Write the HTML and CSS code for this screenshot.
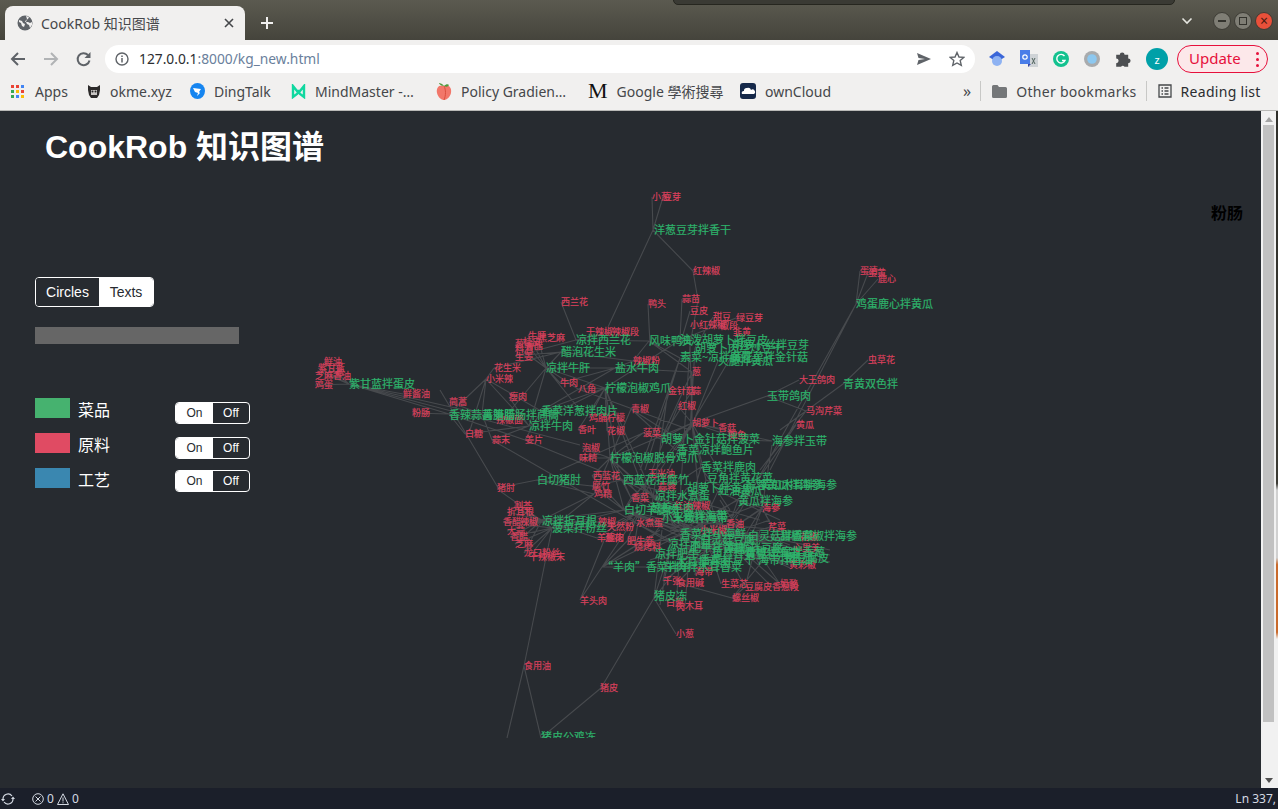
FILE: index.html
```html
<!DOCTYPE html>
<html lang="en">
<head>
  <meta charset="UTF-8">
  <title>CookRob 知识图谱</title>
  <link rel="stylesheet" href="styles.css">
</head>
<body>
  <div class="titlebar">
    <div class="other-window"></div>
    <div class="tab">
      <svg class="globe" width="16" height="16" viewBox="0 0 16 16"><circle cx="8" cy="8" r="7.5" fill="#5f6368"/><path d="M2 5l3 1 1 2 2 1-1 3-2-1-1-3-2-1zM9 1l3 1-1 2-2 1-1 2 3 0 2 1 2-1 0 3-2 3-1-3-2-1-1-2 1-3z" fill="#f1f0ef"/></svg>
      <span class="tab-title">CookRob 知识图谱</span>
      <svg class="tab-close" width="10" height="10" viewBox="0 0 10 10"><path d="M1 1l8 8M9 1l-8 8" stroke="#45474a" stroke-width="1.6"/></svg>
    </div>
    <svg class="new-tab" width="14" height="14" viewBox="0 0 14 14"><path d="M7 1v12M1 7h12" stroke="#f1f0ef" stroke-width="2"/></svg>
    <div class="win-controls">
      <svg class="chevron" width="12" height="8" viewBox="0 0 12 8"><path d="M1.5 1.5L6 6l4.5-4.5" fill="none" stroke="#e6e6e0" stroke-width="1.6"/></svg>
      <span class="win-btn"><i class="win-min"></i></span>
      <span class="win-btn"><i class="win-max"></i></span>
      <span class="win-btn win-close">×</span>
    </div>
  </div>

  <div class="toolbar">
    <div class="nav">
      <svg width="16" height="16" viewBox="0 0 16 16"><path d="M15 8H2M8 2L2 8l6 6" fill="none" stroke="#5f6368" stroke-width="2"/></svg>
      <svg width="16" height="16" viewBox="0 0 16 16"><path d="M1 8h13M8 2l6 6-6 6" fill="none" stroke="#b1b3b5" stroke-width="2"/></svg>
      <svg width="16" height="16" viewBox="0 0 16 16"><path d="M13.5 9.5A6 6 0 1 1 12 4" fill="none" stroke="#5f6368" stroke-width="2"/><path d="M14.5 1v6h-6z" fill="#5f6368"/></svg>
    </div>
    <div class="omnibox">
      <svg width="14" height="14" viewBox="0 0 14 14"><circle cx="7" cy="7" r="6" fill="none" stroke="#5f6368" stroke-width="1.4"/><path d="M7 6v4.500M7 3.500v1.500" stroke="#5f6368" stroke-width="1.5"/></svg>
      <span class="url"><b>127.0.0.1</b>:8000/kg_new.html</span>
      <svg class="send" width="16" height="14" viewBox="0 0 16 14"><path d="M1 1l14 6-14 6 1.500-5L9 7 2.500 6z" fill="#5f6368"/></svg>
      <svg class="star" width="16" height="16" viewBox="0 0 16 16"><path d="M8 1.500l2 4.500 4.800.4-3.600 3.200 1.100 4.800L8 12l-4.300 2.400 1.100-4.800L1.200 6.400 6 6z" fill="none" stroke="#5f6368" stroke-width="1.400"/></svg>
    </div>
    <div class="extensions">
      <svg width="16" height="18" viewBox="0 0 16 18"><path d="M8 1l8 6-8 5-8-5z" fill="#3b66d8"/><circle cx="8" cy="11" r="5" fill="#8eb2f2"/></svg>
      <svg width="18" height="18" viewBox="0 0 18 18"><path d="M8 4h10v13H8z" fill="#cfd3d6"/><path d="M0 0h10v14H0z" fill="#4a7de8"/><circle cx="5" cy="7" r="2.200" fill="none" stroke="#fff" stroke-width="1.200"/><path d="M8 14h3l-3 3z" fill="#3a49a8"/><path d="M12 8l3 6M15 8l-3 6" stroke="#50625c"/></svg>
      <svg width="16" height="16" viewBox="0 0 16 16"><circle cx="8" cy="8" r="8" fill="#13c28f"/><path d="M11.500 5A4.300 4.300 0 1 0 12 9.500H9" fill="none" stroke="#fff" stroke-width="1.400"/></svg>
      <svg width="16" height="16" viewBox="0 0 16 16"><circle cx="8" cy="8" r="8" fill="#a9abad"/><circle cx="8" cy="8" r="4.800" fill="#8dc8f0"/></svg>
      <svg width="18" height="18" viewBox="0 0 15 15"><path d="M1 4h3a2 2 0 0 1 4 0h3v3a2 2 0 0 1 0 4v3H8a2 2 0 0 0-3 0H1v-3a2 2 0 0 0 0-4z" fill="#4d4f52"/></svg>
      <span class="avatar">z</span>
    </div>
    <div class="update">Update <span class="dots"><i></i><i></i><i></i></span></div>
  </div>

  <div class="bookmarks">
    <div class="bm">
      <svg class="apps" width="13" height="13" viewBox="0 0 13 13"><path d="M0 0h3v3H0z" fill="#ea4335"/><path d="M5 0h3v3H5z" fill="#ea4335"/><path d="M10 0h3v3h-3z" fill="#4285f4"/><path d="M0 5h3v3H0z" fill="#34a853"/><path d="M5 5h3v3H5z" fill="#fbbc05"/><path d="M10 5h3v3h-3z" fill="#ea4335"/><path d="M0 10h3v3H0z" fill="#34a853"/><path d="M5 10h3v3H5z" fill="#4285f4"/><path d="M10 10h3v3h-3z" fill="#fbbc05"/></svg>
      <span>Apps</span>
    </div>
    <div class="bm">
      <svg width="14" height="15" viewBox="0 0 14 15"><path d="M1 1l3 2h6l3-2v5l-1 5-2 3H4l-2-3-1-5z" fill="#2c2a2a"/><path d="M4 6h6v5H4z" fill="#c9c6c4"/><circle cx="5.500" cy="7.500" r="1" fill="#222"/><circle cx="8.500" cy="7.500" r="1" fill="#222"/></svg>
      <span>okme.xyz</span>
    </div>
    <div class="bm">
      <svg width="15" height="16" viewBox="0 0 15 16"><ellipse cx="7.500" cy="8" rx="7.500" ry="8" fill="#1685f0"/><path d="M3 5l8 1-2 3 1 1-3 3 1-3-3-1z" fill="#fff"/></svg>
      <span>DingTalk</span>
    </div>
    <div class="bm">
      <svg width="15" height="15" viewBox="0 0 15 15"><path d="M2 2v11l4-3 1.500-2L9 10l4 3V2L9 7H6z" fill="none" stroke="#10d8a0" stroke-width="2.400"/></svg>
      <span>MindMaster -…</span>
    </div>
    <div class="bm">
      <svg width="16" height="18" viewBox="0 0 16 18"><path d="M8 4C3 2 0 6 1 11c1 4 4 7 7 7s6-3 7-7c1-5-2-9-7-7z" fill="#f2776a"/><path d="M8 4C10 8 10 13 8 18" fill="none" stroke="#d9503f"/><path d="M8 4C6 1 3 1 3 1s1 3 5 3zM8 4c2-2 4-2 5-1-1 2-3 2-5 1z" fill="#4d9a3a"/></svg>
      <span>Policy Gradien…</span>
    </div>
    <div class="bm">
      <span class="m-logo">M</span>
      <span>Google 學術搜尋</span>
    </div>
    <div class="bm">
      <svg width="16" height="16" viewBox="0 0 16 16"><rect width="16" height="16" rx="3" fill="#16294a"/><path d="M2 11a2 2 0 0 1 2-3 2.500 2.500 0 0 1 3-3 3 3 0 0 1 4 2 2 2 0 0 1 3 4z" fill="#fff"/></svg>
      <span>ownCloud</span>
    </div>
    <div class="bm-right">
      <span class="more">»</span>
      <i class="sep"></i>
      <svg class="folder" width="15" height="13" viewBox="0 0 15 13"><path d="M0 1.500A1.500 1.500 0 0 1 1.500 0h4L7 2h6.500A1.500 1.500 0 0 1 15 3.500v8a1.500 1.500 0 0 1-1.500 1.500h-12A1.500 1.500 0 0 1 0 11.500z" fill="#757779"/></svg>
      <span class="wide">Other bookmarks</span>
      <i class="sep"></i>
      <svg class="list-icon" width="14" height="14" viewBox="0 0 14 14"><path d="M1 1h12v12H1zM3.500 4H5M6.500 4h4M3.500 7H5M6.500 7h4M3.500 10H5M6.500 10h4" fill="none" stroke="#45474a" stroke-width="1.300"/></svg>
      <span class="wide reading">Reading list</span>
    </div>
  </div>

  <div class="content">
    <main class="page">
      <h1 class="page-title">CookRob 知识图谱</h1>
      <div class="hover-label">粉肠</div>

      <div class="sidebar">
        <div class="view-switch">
          <span class="view-btn view-active">Circles</span>
          <span class="view-btn">Texts</span>
        </div>
        <div class="search-bar"></div>
        <div class="legend">
          <div class="legend-row">
            <span class="swatch swatch-dish"></span><span class="legend-name">菜品</span>
            <div class="toggle"><span class="toggle-on">On</span><span class="toggle-off">Off</span></div>
          </div>
          <div class="legend-row">
            <span class="swatch swatch-ing"></span><span class="legend-name">原料</span>
            <div class="toggle"><span class="toggle-on">On</span><span class="toggle-off">Off</span></div>
          </div>
          <div class="legend-row">
            <span class="swatch swatch-craft"></span><span class="legend-name">工艺</span>
            <div class="toggle toggle-last"><span class="toggle-on">On</span><span class="toggle-off">Off</span></div>
          </div>
        </div>
      </div>

      <svg class="graph" width="938" height="558" viewBox="262 180 938 558">
        <path class="links" d="M653 230L652 197M653 230L663 197M653 230L608 327M653 230L693 271M693 271L698 300M698 300L690 345M690 311L680 345
        M561 302L576 340M561 302L576 340M648 304L650 345M682 299L680 340M736 318L680 340M713 317L695 348
        M868 360L843 384M843 384L780 430M860 271L856 304M868 273L856 304M878 279L856 304M856 304L770 470M856 304L735 520
        M799 380L767 396M767 396L806 411M806 411L760 470M767 396L692 423M796 425L730 520
        M349 384L315 385M349 384L320 372M349 384L324 362M349 384L318 368M349 384L333 376M349 384L449 414M349 384L482 414M349 384L403 394M349 384L580 445M412 413L449 414M449 402L482 414
        M486 379L449 414M486 379L482 414M486 379L541 411M486 379L494 368M486 379L470 430M494 368L561 352M486 379L529 426M515 345L546 368M523 340L546 368M528 335L546 368M538 338L546 368M515 356L561 352M515 356L576 340M546 368L561 352
        M546 368L529 426M546 368L580 410M546 368L578 389M546 368L615 368M546 368L605 388M546 368L560 383M546 368L509 412M560 383L615 368M578 389L605 388M578 389L690 430M615 368L633 361M615 368L692 372M615 368L541 411M509 397L529 426M561 352L633 361M576 340L649 341M576 340L612 332
        M605 388L589 418M605 388L607 431M605 388L578 430M605 388L610 458M605 388L640 480M605 388L655 500M605 388L541 411M605 388L529 426M605 388L620 480M605 388L680 340M649 341L680 358M649 341L633 361M649 341L692 372
        M465 434L529 426M465 434L449 414M492 440L482 414M492 440L529 426M492 440L700 560M525 440L449 414M525 440L541 411M525 440L623 480M582 448L610 458M579 458L610 458M631 409L610 458M631 409L680 440M631 409L676 450
        M692 372L692 423M692 372L661 439M692 391L692 423M692 391L661 439M678 406L692 423M678 406L640 500M668 391L661 439M668 391L650 520M680 358L645 470M680 358L640 470M731 357L692 423M718 361L690 430M695 348L690 430M690 345L692 423M690 345L680 500M680 340L605 388
        M692 423L718 428M692 423L728 435M692 423L772 441M692 423L661 439M692 423L676 450M692 423L701 467M692 423L706 480M692 423L705 560M692 423L640 500M692 423L624 510M692 423L655 497M692 423L610 458M692 423L730 490M643 433L661 439M643 433L560 470M643 433L610 458
        M610 458L640 497M610 458L624 510M610 458L680 520M610 458L700 540M610 458L655 497M610 458L592 476M610 458L594 494M610 458L631 498
        M537 480L497 488M537 480L592 486M537 480L594 494M592 476L624 510M592 486L624 510M594 494L542 520M594 494L552 528M623 480L631 498M623 480L593 476M623 480L700 545M623 480L675 506M623 480L590 486M623 480L760 520
        M631 498L624 510M631 498L690 530M631 498L730 520M631 498L655 497M631 498L650 480M675 506L655 497M675 506L720 540M624 510L636 523M624 510L542 520M624 510L552 528M624 510L700 540M624 510L750 550M624 510L760 560M624 510L720 555M624 510L710 530
        M655 497L730 520M655 497L690 550M655 497L760 540M655 497L780 550M655 497L701 467M701 467L730 510M701 467L680 540M706 480L760 500M706 480L690 530M687 488L720 520M687 488L650 540M718 491L780 520M718 491L700 530M738 500L762 508M738 500L700 520M738 500L720 550M760 485L762 508M760 485L690 530
        M762 508L730 560M762 508L750 540M762 508L700 550M762 508L772 445M762 508L780 540M762 508L790 560M762 508L770 500M762 508L736 550M772 441L740 440
        M542 520L514 507M542 520L507 512M542 520L503 522M542 520L520 522M542 520L507 531M542 520L510 537M542 520L515 544M542 520L524 553M542 520L598 522M552 528L514 507M552 528L503 522M552 528L510 537M552 528L515 544M552 528L524 553M552 528L529 557M552 528L598 522M552 528L607 527M552 528L524 666M552 528L500 491M500 491L440 390M542 520L597 538
        M598 522L636 523M607 527L640 510M597 538L640 510M605 538L640 510M605 538L580 600M627 541L640 510M634 547L640 510M627 541L602 567M634 547L602 567M636 523L700 530M636 523L680 545M636 523L710 560M627 541L690 540M634 547L700 560
        M602 567L580 600M602 567L735 567M602 567L700 520M602 567L660 530M602 567L640 510M654 598L601 688M654 598L676 634M654 598L662 530M654 598L670 550M654 598L700 540M660 605L670 550M685 606L690 545M676 607L680 550M524 666L507 738M524 666L541 738M601 688L541 738
        M663 581L670 545M663 581L720 540M677 583L720 540M677 583L732 598M732 598L780 540M732 598L745 587M721 584L710 550M745 587L760 530M772 587L730 545M780 584L730 540M780 584L760 555M745 587L715 530
        M650 520L830 555M670 530L830 562M680 540L800 565M690 520L790 568M700 530L800 540M710 525L830 550M720 545L817 536M730 530L793 548M740 550L789 565M750 530L790 545M700 560L820 555M680 555L800 530M660 560L770 527M650 550L730 510M665 540L770 500M675 520L760 560M700 510L780 560M720 500L760 565M690 500L740 560M710 500L730 570M740 510L690 570M760 510L670 570M770 520L650 560M780 530L670 520M800 540L680 530M695 575L740 520M695 575L700 530"/>

        <g class="ing">
          <text x="561" y="305">西兰花</text><text x="586" y="335">干辣椒</text><text x="612" y="335">辣椒段</text>
          <text x="528" y="339">牛肝</text><text x="523" y="345">桂皮</text><text x="538" y="341">黑芝麻</text><text x="515" y="347">葱</text><text x="525" y="349">香醋</text><text x="515" y="352">料酒</text><text x="515" y="360">生姜</text>
          <text x="494" y="371">花生米</text><text x="486" y="382">小米辣</text><text x="560" y="386">牛肉</text><text x="578" y="392">八角</text><text x="509" y="400">瘦肉</text>
          <text x="449" y="405">茼蒿</text><text x="403" y="397">鲜酱油</text><text x="412" y="416">粉肠</text><text x="496" y="423">辣椒面</text><text x="589" y="421">鸡脯柠檬</text>
          <text x="578" y="433">香叶</text><text x="607" y="434">花椒</text><text x="465" y="437">白糖</text><text x="492" y="443">蒜末</text><text x="525" y="443">姜片</text><text x="582" y="451">泡椒</text><text x="579" y="461">味精</text>
          <text x="324" y="365">鲜油</text><text x="318" y="371">紫甘蓝</text><text x="335" y="375">盐</text><text x="315" y="379">芝麻</text><text x="333" y="379">香油</text><text x="315" y="388">鸡蛋</text>
          <text x="652" y="200">小葱</text><text x="663" y="200">豆芽</text><text x="693" y="274">红辣椒</text><text x="682" y="302">蒜苗</text><text x="690" y="314">豆皮</text><text x="648" y="307">鸭头</text>
          <text x="713" y="320">甜豆</text><text x="736" y="321">绿豆芽</text><text x="690" y="328">小红辣椒</text><text x="720" y="329">椒段</text><text x="733" y="335">韭黄</text>
          <text x="633" y="364">辣椒粉</text><text x="692" y="375">葱</text><text x="668" y="394">金针菇</text><text x="692" y="394">蒜</text><text x="678" y="409">红椒</text><text x="631" y="412">青椒</text>
          <text x="692" y="426">胡萝卜</text><text x="718" y="431">香菇</text><text x="728" y="438">鲍鱼</text><text x="643" y="436">菠菜</text>
          <text x="860" y="274">蛋清</text><text x="868" y="276">蛋黄</text><text x="878" y="282">鹿心</text><text x="868" y="363">虫草花</text><text x="799" y="383">大王鸽肉</text><text x="806" y="414">马沟芹菜</text><text x="796" y="428">黄瓜</text>
          <text x="497" y="491">猪肘</text><text x="593" y="479">西蓝花</text><text x="592" y="489">腐竹</text><text x="594" y="497">鸡精</text><text x="648" y="477">玉米油</text><text x="658" y="490">蒜蓉</text><text x="631" y="501">香菜</text><text x="674" y="509">红油辣椒</text><text x="762" y="511">海参</text>
          <text x="636" y="526">水煮蛋</text><text x="514" y="509">割荟</text><text x="507" y="515">折耳根</text><text x="503" y="525">香醋</text><text x="520" y="525">辣椒</text><text x="507" y="534">大蒜</text><text x="510" y="540">香醋</text><text x="515" y="547">芝麻</text><text x="524" y="556">龙口粉丝</text><text x="529" y="560">干辣椒末</text>
          <text x="598" y="525">辣椒</text><text x="607" y="530">天然粉</text><text x="597" y="541">羊腿肉</text><text x="605" y="541">葱花</text><text x="627" y="544">肥牛卷</text><text x="634" y="550">烧烤料</text>
          <text x="726" y="527">香油</text><text x="700" y="533">小米椒</text><text x="768" y="530">芹菜</text><text x="793" y="551">心里美</text><text x="789" y="568">黄彩椒</text><text x="800" y="540">花椒</text><text x="695" y="575">海带</text>
          <text x="663" y="584">千张</text><text x="677" y="586">食用碱</text><text x="721" y="587">生菜芯</text><text x="745" y="590">豆腐皮</text><text x="772" y="590">香葱段</text><text x="780" y="587">奶酪</text><text x="732" y="601">螺丝椒</text>
          <text x="580" y="604">羊头肉</text><text x="666" y="606">白葱</text><text x="676" y="610">肉</text><text x="685" y="609">木耳</text><text x="676" y="637">小葱</text><text x="524" y="669">食用油</text><text x="600" y="691">猪皮</text>
        </g>

        <g class="dish">
          <text x="654" y="234">洋葱豆芽拌香干</text><text x="856" y="308">鸡蛋鹿心拌黄瓜</text><text x="576" y="344">凉拌西兰花</text><text x="561" y="356">醋泡花生米</text><text x="649" y="345">风味鸭头</text>
          <text x="680" y="344">油泼胡萝卜拌豆皮</text><text x="695" y="352">胡萝卜肉丝炒豆干</text><text x="732" y="349">胡萝卜丝拌豆芽</text><text x="680" y="361">素菜~凉拌腐竹</text><text x="718" y="365">火腿拌黄瓜</text><text x="731" y="361">黄花菜拌金针菇</text>
          <text x="546" y="372">凉拌牛肝</text><text x="615" y="372">盐水牛肉</text><text x="605" y="392">柠檬泡椒鸡爪</text><text x="767" y="400">玉带鸽肉</text><text x="843" y="388">青黄双色拌</text><text x="349" y="388">紫甘蓝拌蛋皮</text>
          <text x="449" y="419">香辣蒜香腊肠</text><text x="482" y="419">莴笋腊肠拌茼蒿</text><text x="541" y="415">香菜洋葱拌肉片</text><text x="529" y="430">凉拌牛肉</text>
          <text x="610" y="462">柠檬泡椒脱骨鸡爪</text><text x="661" y="443">胡萝卜金针菇拌菠菜</text><text x="677" y="454">香菜凉拌鲍鱼片</text><text x="772" y="445">海参拌玉带</text><text x="701" y="471">香菜拌鹿肉</text>
          <text x="537" y="484">白切猪肘</text><text x="623" y="484">西蓝花拌腐竹</text><text x="707" y="482">豆角拌黄花菜</text><text x="687" y="492">胡萝卜拌黄瓜</text><text x="718" y="495">红油黄瓜</text><text x="745" y="489">蒜蓉黄瓜拌海参</text><text x="760" y="489">黄瓜木耳拌海参</text><text x="738" y="505">黄瓜拌海参</text>
          <text x="655" y="500">凉拌水煮蛋</text><text x="624" y="514">白切羊腿肉</text><text x="650" y="512">葱姜羊肉</text><text x="542" y="525">凉拌折耳根</text><text x="552" y="532">菠菜拌粉丝</text><text x="662" y="522">小米椒拌海带</text><text x="672" y="520">生姜拌海带</text>
          <text x="780" y="540">甜椒彩椒拌海参</text><text x="748" y="540">白灵菇拌香菜</text><text x="680" y="538">香菜拌小海鲜</text><text x="668" y="548">凉拌木耳</text><text x="700" y="544">白灵菇豆腐</text><text x="690" y="552">肥牛拌黄瓜</text><text x="655" y="558">凉拌肥牛</text>
          <text x="712" y="556">鱼片拌青椒</text><text x="728" y="552">海蛎拌豆腐</text><text x="745" y="558">黄豆拌海带</text><text x="676" y="566">木耳拌鸡肉</text><text x="700" y="564">香菜拌豆干</text><text x="758" y="564">海带拌香油</text><text x="785" y="562">嫩豆腐皮</text><text x="770" y="556">豆腐拌香葱</text>
          <text x="602" y="571">“羊肉”香菜拌羊</text><text x="665" y="571">羊肉拌木耳香菜</text><text x="654" y="600">猪皮冻</text><text x="541" y="741">猪皮公鸡冻</text>
        </g>
      </svg>
    </main>
    <div class="scrollbar">
      <i class="arrow-up"></i>
      <div class="thumb"></div>
      <i class="arrow-down"></i>
    </div>
    <div class="sliver"></div>
  </div>

  <footer class="statusbar">
    <svg class="sync" width="14" height="12" viewBox="0 0 14 12"><path d="M2 6a5 5 0 0 1 9-3M12 6a5 5 0 0 1-9 3" fill="none" stroke="#d5dae3" stroke-width="1.200"/><path d="M0 6h4L2 8.500zM10 6h4l-2-2.500z" fill="#d5dae3"/></svg>
    <svg class="err" width="12" height="12" viewBox="0 0 12 12"><circle cx="6" cy="6" r="5.300" fill="none" stroke="#d5dae3"/><path d="M3.500 3.500l5 5M8.500 3.500l-5 5" stroke="#d5dae3"/></svg>
    <span>0</span>
    <svg width="12" height="12" viewBox="0 0 12 12"><path d="M6 .8L11.500 11.500H.5zM6 4.500v4M6 9.300v1" fill="none" stroke="#d5dae3"/></svg>
    <span>0</span>
    <span class="cursor-pos">Ln 337,</span>
  </footer>
</body>
</html>
```

FILE: styles.css
```css
* {
  box-sizing: border-box;
}
body {
  margin: 0;
  width: 1278px;
  height: 809px;
  overflow: hidden;
  display: flex;
  flex-direction: column;
  font-family: "Noto Sans", "Noto Sans CJK SC", sans-serif;
}

/* browser chrome */
.titlebar {
  position: relative;
  height: 40px;
  background: linear-gradient(#5b5a50, #45443c);
  display: flex;
  align-items: flex-end;
  padding-left: 5px;
}
.other-window {
  position: absolute;
  top: -2px;
  left: 673px;
  width: 502px;
  height: 7px;
  background: #3a3a34;
  border: 1px solid #26261f;
  border-radius: 0 0 5px 5px;
}
.tab {
  width: 240px;
  height: 34px;
  background: #f1f0ef;
  border-radius: 8px 8px 0 0;
  display: flex;
  align-items: center;
  padding: 0 11px 0 12px;
  color: #45474a;
  font-size: 14px;
}
.tab-title {
  margin-left: 8px;
  flex: 1;
}
.new-tab {
  margin: 0 0 10px 15px;
}
.win-controls {
  margin-left: auto;
  display: flex;
  align-items: center;
  gap: 3px;
  padding: 0 5px 10px 0;
}
.chevron {
  margin-right: 17px;
}
.win-btn {
  width: 18px;
  height: 18px;
  border-radius: 50%;
  background: #7f7e75;
  border: 1px solid #3d3c35;
  display: flex;
  align-items: center;
  justify-content: center;
}
.win-min {
  width: 8px;
  height: 2px;
  background: #33332d;
}
.win-max {
  width: 8px;
  height: 8px;
  border: 1px solid #33332d;
}
.win-close {
  background: #e9503a;
  color: #4a1a10;
  font-size: 14px;
  line-height: 1;
}

.toolbar {
  height: 40px;
  background: #f1f0ef;
  display: flex;
  align-items: center;
  padding: 0 0 2px 10px;
}
.nav {
  display: flex;
  gap: 17px;
  width: 95px;
}
.omnibox {
  width: 870px;
  height: 28px;
  border-radius: 14px;
  background: #fff;
  display: flex;
  align-items: center;
  padding: 0 10px 0 10px;
  font-size: 13.8px;
  color: #6a7f9c;
}
.url {
  margin: 0 0 2px 10px;
  flex: 1;
}
.url b {
  font-weight: 400;
  color: #2b2d30;
}
.send {
  margin-right: 17px;
}
.extensions {
  display: flex;
  align-items: center;
  width: 202px;
  padding-left: 14px;
  gap: 15px;
}
.avatar {
  width: 22px;
  height: 22px;
  margin-left: -2px;
  border-radius: 50%;
  background: #00a0a8;
  color: #fff;
  font-size: 11px;
  display: flex;
  align-items: center;
  justify-content: center;
}
.update {
  width: 91px;
  height: 28px;
  border: 1px solid #e6103c;
  border-radius: 14px;
  background: #fce8ea;
  color: #e6103c;
  font-size: 15px;
  display: flex;
  align-items: center;
  justify-content: space-between;
  padding: 0 8px 3px 11px;
}
.dots {
  display: flex;
  flex-direction: column;
  gap: 3px;
  margin-top: 3px;
}
.dots i {
  width: 3px;
  height: 3px;
  border-radius: 50%;
  background: #e6103c;
}

.bookmarks {
  height: 31px;
  background: #f1f0ef;
  border-bottom: 1px solid #b9b9b7;
  display: grid;
  grid-template-columns: 76px 103px 101px 145px 152px 152px 223px 1fr;
  align-items: center;
  padding: 0 0 10px 11px;
  font-size: 14px;
  color: #45474a;
}
.bm {
  display: flex;
  align-items: center;
  gap: 9px;
  white-space: nowrap;
}
.apps {
  margin-right: 2px;
}
.m-logo {
  font-family: "Liberation Serif", serif;
  font-size: 22px;
  line-height: 1;
  color: #111;
}
.bm-right {
  display: flex;
  align-items: center;
  gap: 9px;
  white-space: nowrap;
}
.more {
  font-size: 16px;
  line-height: 1;
}
.folder {
  margin-left: 2px;
}
.list-icon {
  margin-left: 2px;
}
.wide {
  letter-spacing: 0.3px;
}
.sep {
  width: 1px;
  height: 20px;
  background: #c8c8c6;
}
.reading {
  color: #2b2d30;
}

/* page */
.content {
  flex: 1;
  display: flex;
  min-height: 0;
}
.page {
  position: relative;
  flex: 1;
  background: #272b30;
  min-width: 0;
  font-family: "Liberation Sans", "Noto Sans CJK SC", sans-serif;
}
.page-title {
  margin: 0;
  padding: 17px 0 0 45px;
  font-size: 32px;
  line-height: 38px;
  font-weight: 700;
  color: #fff;
}
.hover-label {
  position: absolute;
  top: 89px;
  right: 18px;
  font-size: 16px;
  font-weight: 700;
  color: #000;
}
.sidebar {
  position: relative;
  z-index: 1;
  margin-top: 111px;
  padding-left: 35px;
  width: 262px;
}
.view-switch {
  display: inline-flex;
  height: 30px;
  border: 1px solid #fff;
  border-radius: 4px;
  overflow: hidden;
  font-size: 14px;
}
.view-btn {
  display: flex;
  align-items: center;
  justify-content: center;
  width: 54px;
  background: #fff;
  color: #272b30;
}
.view-active {
  width: 63px;
  background: #272b30;
  color: #fff;
}
.search-bar {
  width: 204px;
  height: 17px;
  margin-top: 20px;
  background: #666;
}
.legend {
  margin-top: 54px;
}
.legend-row {
  display: flex;
  height: 35px;
  color: #fff;
  font-size: 16px;
}
.swatch {
  width: 35px;
  height: 20px;
}
.swatch-dish {
  background: #46b26f;
}
.swatch-ing {
  background: #e04b63;
}
.swatch-craft {
  background: #3a87b0;
}
.legend-name {
  width: 105px;
  padding-left: 8px;
  line-height: 25px;
}
.toggle {
  display: flex;
  width: 75px;
  height: 22px;
  margin-top: 4px;
  border: 1px solid #fff;
  border-radius: 4px;
  overflow: hidden;
  font-size: 12px;
  line-height: 20px;
  text-align: center;
}
.toggle-last {
  margin-top: 2px;
}
.toggle-on {
  width: 37px;
  background: #fff;
  color: #272b30;
}
.toggle-off {
  flex: 1;
  color: #fff;
}

/* knowledge graph */
.graph {
  position: absolute;
  left: 262px;
  top: 69px;
  overflow: hidden;
}
.links {
  fill: none;
  stroke: #999;
  stroke-width: 1.1;
  stroke-opacity: 0.28;
}
.graph text {
  font-family: "Noto Sans CJK SC", "Liberation Sans", sans-serif;
  stroke-width: 0.2;
}
.ing {
  fill: #d8405c;
  stroke: #d8405c;
  font-size: 9px;
}
.dish {
  fill: #2eb26b;
  stroke: #2eb26b;
  font-size: 11px;
}

.scrollbar {
  width: 15px;
  background: #f1f1f1;
  display: flex;
  flex-direction: column;
  align-items: center;
  padding: 6px 0 5px;
}
.thumb {
  width: 11px;
  flex: 1;
  margin: 3px 0 56px;
  background: #c1c1c1;
}
.arrow-up {
  border: 4px solid transparent;
  border-top: 0;
  border-bottom: 5px solid #a3a3a3;
}
.arrow-down {
  border: 4px solid transparent;
  border-bottom: 0;
  border-top: 5px solid #505050;
}
.sliver {
  width: 2px;
  background: linear-gradient(#2f2f2a 0, #3b3a33 55%, #d0d0d0 56%, #d0d0d0 66%, #c96a2c 67%, #c96a2c 77%, #f1f1f1 78%);
}

.statusbar {
  height: 21px;
  background: #1b1f2a;
  color: #d5dae3;
  display: flex;
  align-items: center;
  gap: 3px;
  font-size: 12px;
  padding-left: 1px;
}
.sync {
  margin-right: 14px;
}
.cursor-pos {
  margin-left: auto;
  padding-right: 2px;
}
```
